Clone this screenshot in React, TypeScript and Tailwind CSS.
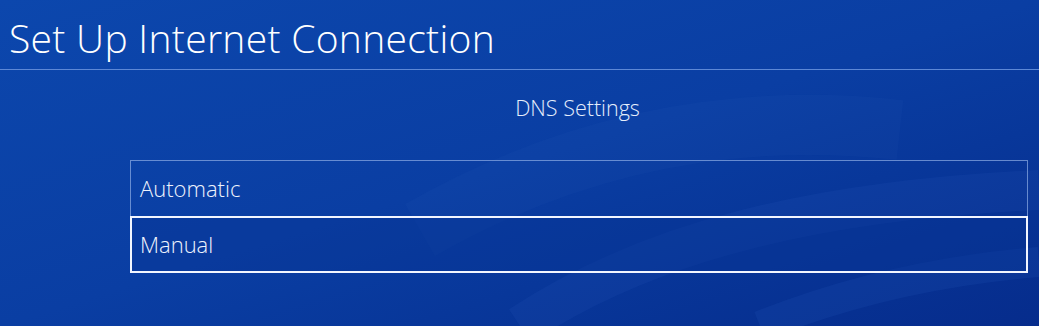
export default function App() {
  const options = ["Automatic", "Manual"];
  const selected = 1;

  return (
    <div
      className="relative h-[326px] w-[1039px] overflow-hidden bg-gradient-to-br from-[#0c47ad] via-[#0a3ea3] to-[#062c8c] text-white"
      style={{ fontFamily: '"Open Sans", "Noto Sans", sans-serif' }}
    >
      {/* soft wave streaks in the backdrop */}
      <svg className="absolute inset-0" width="1039" height="326" viewBox="0 0 1039 326">
        <path d="M520 326 C 650 240, 820 200, 1039 190" stroke="#3a6fd0" strokeOpacity="0.1" strokeWidth="40" fill="none" />
        <path d="M420 230 C 560 150, 720 110, 900 130" stroke="#2f63c4" strokeOpacity="0.08" strokeWidth="60" fill="none" />
        <path d="M760 326 C 850 290, 940 270, 1039 262" stroke="#3a72d8" strokeOpacity="0.1" strokeWidth="30" fill="none" />
      </svg>

      <div className="relative flex flex-col">
        <header className="border-b border-[#5d88d6] pl-[9px] pt-[13px] pb-[6px]">
          <h1 className="text-[39px] font-light leading-[50px] tracking-[0.3px]">Set Up Internet Connection</h1>
        </header>

        <p className="mt-[24px] text-center text-[21.5px] font-light leading-[28px] text-[#e6eefc] pl-[116px]">
          DNS Settings
        </p>

        <div className="ml-[130px] mt-[38px] flex w-[898px] flex-col">
          {options.map((option, i) => (
            <div
              key={option}
              className={
                i === selected
                  ? "flex h-[57px] items-center border-2 border-[#f2f6ff] bg-[#083594]/40 pl-[8px]"
                  : "flex h-[56px] items-center border border-b-0 border-[#8eaee6]/70 pl-[9px]"
              }
            >
              <span className="text-[22px] font-light text-[#eef3fd]">{option}</span>
            </div>
          ))}
        </div>
      </div>
    </div>
  );
}
